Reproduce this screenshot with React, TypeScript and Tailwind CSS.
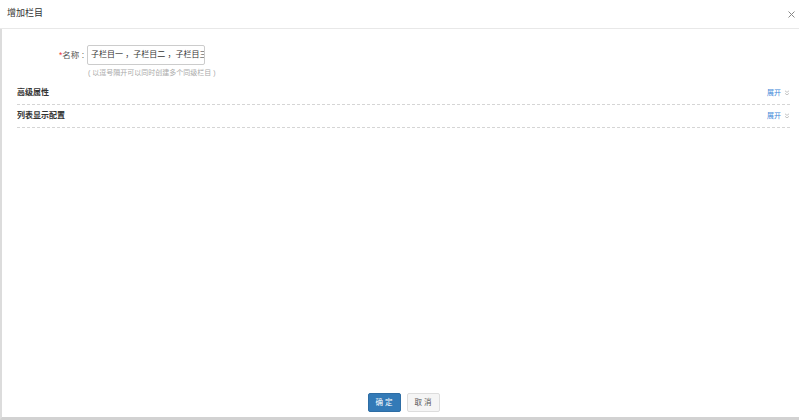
import React from "react";

const font = {
  fontFamily: '"Liberation Sans", "Noto Sans CJK SC", sans-serif',
};

const Section = ({ title }: { title: string }) => (
  <div className="flex h-[23px] items-center justify-between border-b border-dashed border-[#d5d5d5] pt-[1px]">
    <span className="text-[8px] font-bold text-[#333]">{title}</span>
    <span className="flex items-center gap-[3px] text-[7px] text-[#3d86d8]">
      展开
      <svg width="6" height="6" viewBox="0 0 6 6" fill="none" stroke="#b5b5b5" strokeWidth="0.8">
        <path d="M1 0.8 L3 2.4 L5 0.8" />
        <path d="M1 3.3 L3 4.9 L5 3.3" />
      </svg>
    </span>
  </div>
);

export default function App() {
  return (
    <div className="flex h-[420px] w-[799px] flex-col bg-white" style={font}>
      <div className="flex h-[29px] shrink-0 items-center justify-between border-b border-[#e8e8e8] pl-[7px] pr-[4px]">
        <span className="text-[9px] text-[#333]">增加栏目</span>
        <svg width="7" height="7" viewBox="0 0 7 7" stroke="#888" strokeWidth="1">
          <path d="M0.5 0.5 L6.5 6.5 M6.5 0.5 L0.5 6.5" />
        </svg>
      </div>

      <div className="flex flex-1 flex-col border-b-[3px] border-l-2 border-b-[#d2d2d2] border-l-[#dcdcdc]">
        <div className="pt-[16px]">
          <div className="flex items-center">
            <label className="w-[85px] pr-[3px] text-right text-[8.5px] text-[#555]">
              <span className="text-[#e33]">*</span>名称 :
            </label>
            <div className="flex h-[20px] w-[118px] items-center overflow-hidden whitespace-nowrap rounded-[2px] border border-[#ccc] px-[3px] text-[8px] text-[#333]">
              子栏目一 ，子栏目二 ，子栏目三
            </div>
          </div>
          <div className="mt-[3px] pl-[86px] text-[7px] text-[#aaa]">
            ( 以逗号隔开可以同时创建多个同级栏目 )
          </div>
        </div>

        <div className="mt-[3px] pl-[15px] pr-[9px]">
          <Section title="高级属性" />
          <Section title="列表显示配置" />
        </div>

        <div className="mt-auto flex justify-center gap-[6px] pb-[5px] pl-[6px]">
          <button className="flex h-[19px] w-[33px] items-center justify-center rounded-[2px] border border-[#2e6da4] bg-[#337ab7] text-[7.5px] text-white">
            确 定
          </button>
          <button className="flex h-[19px] w-[33px] items-center justify-center rounded-[2px] border border-[#ddd] bg-[#f5f5f5] text-[7.5px] text-[#555]">
            取 消
          </button>
        </div>
      </div>
    </div>
  );
}
